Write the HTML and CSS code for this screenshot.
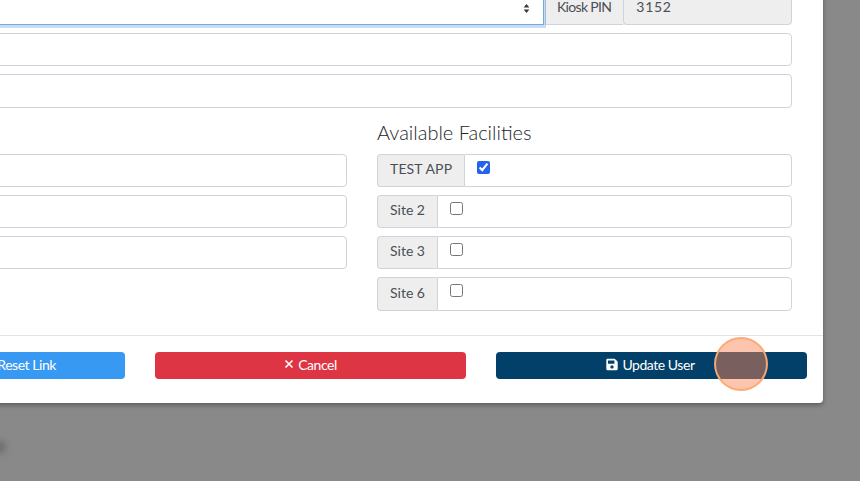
FILE: index.html
```html
<!DOCTYPE html>
<html lang="en">
<head>
<meta charset="utf-8">
<title>Edit User</title>
<link rel="stylesheet" href="styles.css">
</head>
<body>
<div class="modal">
  <form class="modal-body">
    <div class="row-top">
      <div class="select-box"><svg class="carets" viewBox="0 0 8 11"><path d="M4 0L7.5 4.4H.5zM4 11L.5 6.6h7z"/></svg></div>
      <div class="group kiosk">
        <span class="addon">Kiosk PIN</span>
        <span class="field readonly">3152</span>
      </div>
    </div>
    <div class="field"></div>
    <div class="field"></div>
    <div class="columns">
      <div class="col col-left">
        <div class="field"></div>
        <div class="field"></div>
        <div class="field"></div>
      </div>
      <div class="col">
        <h4>Available Facilities</h4>
        <div class="group"><span class="addon wide-label">TEST APP</span><span class="field check-cell"><input type="checkbox" checked></span></div>
        <div class="group"><span class="addon">Site 2</span><span class="field check-cell"><input type="checkbox"></span></div>
        <div class="group"><span class="addon">Site 3</span><span class="field check-cell"><input type="checkbox"></span></div>
        <div class="group"><span class="addon">Site 6</span><span class="field check-cell"><input type="checkbox"></span></div>
      </div>
    </div>
  </form>
  <div class="modal-footer">
    <button class="btn btn-blue" type="button">Send Password Reset Link</button>
    <button class="btn btn-red" type="button"><svg class="icon-x" viewBox="0 0 10 10"><path d="M1.5 1.5l7 7M8.5 1.5l-7 7"/></svg>Cancel</button>
    <button class="btn btn-navy" type="button"><svg class="icon-save" viewBox="0 0 448 512"><path d="M433.941 129.941l-83.882-83.882A48 48 0 0 0 316.118 32H48C21.49 32 0 53.49 0 80v352c0 26.51 21.49 48 48 48h352c26.51 0 48-21.49 48-48V163.882a48 48 0 0 0-14.059-33.941zM224 416c-35.346 0-64-28.654-64-64 0-35.346 28.654-64 64-64s64 28.654 64 64c0 35.346-28.654 64-64 64zm96-304.52V212c0 6.627-5.373 12-12 12H76c-6.627 0-12-5.373-12-12V108c0-6.627 5.373-12 12-12h228.52c3.183 0 6.235 1.264 8.485 3.515l3.48 3.48A11.996 11.996 0 0 1 320 111.48z"/></svg>Update User</button>
  </div>
</div>
<div class="click-marker"></div>
<div class="smudge"></div>
</body>
</html>
```
FILE: styles.css
```css
* { box-sizing: border-box; }
html, body { height: 100%; }
body {
  margin: 0;
  overflow: hidden;
  background: #898989;
  font-family: "Lato", "Open Sans", sans-serif;
  font-size: 14px;
  color: #4a4f55;
}
.modal {
  width: 1025px;
  margin-left: -202px;
  margin-top: -20px;
  background: #fff;
  border-radius: 0 0 4px 4px;
  box-shadow: 0 2px 5px rgba(0, 0, 0, .35);
}
.modal-body {
  padding: 0 31px 24px;
  display: flex;
  flex-direction: column;
  gap: 8px;
}
.row-top {
  display: grid;
  grid-template-columns: 1fr 247px;
  gap: 1px;
  height: 45px;
}
.select-box {
  position: relative;
  z-index: 1;
  background: #fff;
  border: 1px solid #74a9dc;
  box-shadow: 2px 3px 0 rgba(0, 100, 200, .22);
  display: flex;
  align-items: flex-end;
  justify-content: flex-end;
  padding: 0 13px 11px 0;
}
.carets { width: 7px; height: 9px; fill: #343a40; }
.field {
  display: block;
  height: 33.3px;
  border: 1px solid #ced4da;
  border-radius: 4px;
  background: #fff;
}
.group { display: flex; height: 33.3px; }
.kiosk { height: 44.5px; background: #eeeeee; border-radius: 0 0 4px 0; }
.addon {
  display: flex;
  align-items: center;
  padding: 0 12px 4px;
  background: #eeeeee;
  border: 1px solid #ced4da;
  border-right: 0;
  border-radius: 4px 0 0 4px;
  white-space: nowrap;
}
.wide-label { letter-spacing: .12px; }
.group .field { flex: 1; height: auto; border-radius: 0 4px 4px 0; }
.kiosk .addon {
  padding: 17px 12px 0 11px;
  align-items: flex-start;
  line-height: 17px;
  letter-spacing: -.67px;
  border-radius: 0;
}
.group .readonly {
  background: #eeeeee;
  padding: 17px 12px 0;
  line-height: 17px;
  letter-spacing: .7px;
  border-radius: 0 0 4px 4px;
}
.columns {
  display: grid;
  grid-template-columns: 1fr 415px;
  gap: 30px;
  margin-top: 5.4px;
}
.col { display: flex; flex-direction: column; gap: 8px; }
.col-left { padding-top: 32.6px; }
h4 {
  margin: 0;
  height: 24.6px;
  font-size: 20px;
  font-weight: 300;
  line-height: 22px;
  color: #212529;
}
.check-cell { padding: 6px 12px; display: block; }
.check-cell input { display: block; width: 13px; height: 13px; margin: 0; accent-color: #2563eb; }
.modal-footer {
  border-top: 1px solid #e3e3e3;
  padding: 16px;
  height: 68px;
  display: grid;
  grid-template-columns: repeat(3, 311px);
  gap: 30px;
}
.btn {
  height: 27px;
  border: 0;
  border-radius: 4px;
  color: #fff;
  font: inherit;
  letter-spacing: -.45px;
  display: flex;
  align-items: center;
  justify-content: center;
  padding: 0 0 2px;
}
.btn-blue { background: #3899f2; padding-left: 24px; }
.btn-red { background: #de3545; }
.btn-navy { background: #034069; padding-right: 2px; }
.icon-x { width: 10px; height: 10px; margin-right: 4px; fill: none; stroke: #fff; stroke-width: 1.6; }
.icon-save { width: 12px; height: 13px; margin-right: 4px; fill: #fff; }
.click-marker {
  position: absolute;
  left: 714px;
  top: 337px;
  width: 54px;
  height: 54px;
  border-radius: 50%;
  border: 2px solid rgba(250, 170, 115, .95);
  background: rgba(250, 131, 85, .48);
}
.smudge {
  position: absolute;
  left: -8px;
  top: 440px;
  width: 14px;
  height: 14px;
  border-radius: 50%;
  background: #707070;
  filter: blur(3px);
}
```
